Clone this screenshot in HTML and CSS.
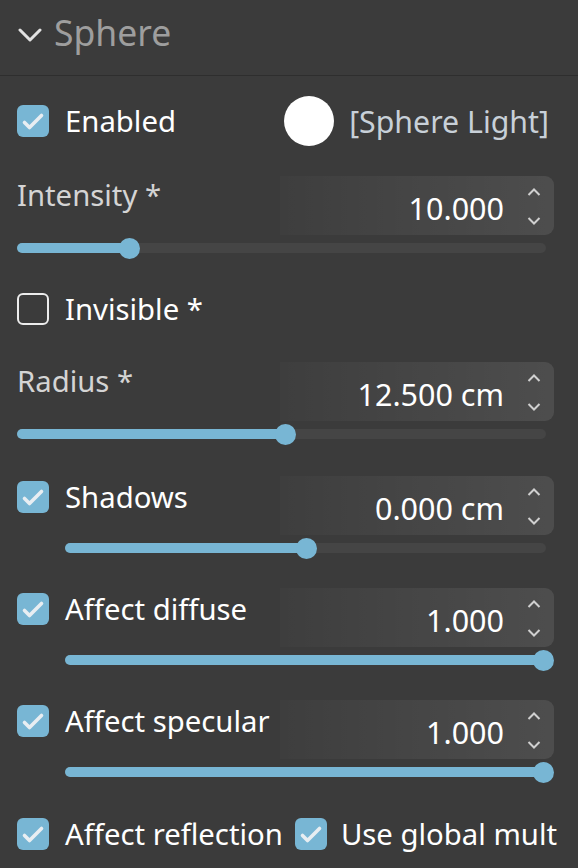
FILE: index.html
```html
<!DOCTYPE html>
<html>
<head>
<meta charset="utf-8">
<link rel="stylesheet" href="styles.css">
</head>
<body>
<div class="header">
  <svg class="chev" width="24" height="14" viewBox="0 0 24 14"><polyline points="2,2 12,12 22,2" fill="none" stroke="#e2e2e2" stroke-width="3" stroke-linecap="round" stroke-linejoin="round"/></svg>
  <span class="title">Sphere</span>
</div>
<div class="panel">
  <div class="row-enabled">
    <div class="check-label">
      <span class="cb on"><svg width="32" height="32" viewBox="0 0 32 32"><polyline points="7.5,17.5 12.5,22.5 24.5,10.5" fill="none" stroke="#e8eef2" stroke-width="3.6" stroke-linecap="round" stroke-linejoin="round"/></svg></span>
      <span class="txt">Enabled</span>
    </div>
    <div class="light">
      <span class="dot"></span>
      <span class="light-name">[Sphere Light]</span>
    </div>
  </div>

  <div class="prop m-intensity">
    <div class="prop-head">
      <span class="prop-label">Intensity *</span>
      <div class="field"><span class="val">10.000</span><svg class="spin" width="14" height="59" viewBox="0 0 14 59"><polyline points="1.5,19 7,13.5 12.5,19" fill="none" stroke="#d0d0d0" stroke-width="2"/><polyline points="1.5,42 7,47.5 12.5,42" fill="none" stroke="#d0d0d0" stroke-width="2"/></svg></div>
    </div>
    <div class="slider"><div class="track"><div class="fill" style="width:21.2%"><span class="thumb"></span></div></div></div>
  </div>

  <div class="check-label m-invisible">
    <span class="cb off"></span>
    <span class="txt">Invisible *</span>
  </div>

  <div class="prop m-radius">
    <div class="prop-head">
      <span class="prop-label">Radius *</span>
      <div class="field"><span class="val">12.500 cm</span><svg class="spin" width="14" height="59" viewBox="0 0 14 59"><polyline points="1.5,19 7,13.5 12.5,19" fill="none" stroke="#d0d0d0" stroke-width="2"/><polyline points="1.5,42 7,47.5 12.5,42" fill="none" stroke="#d0d0d0" stroke-width="2"/></svg></div>
    </div>
    <div class="slider"><div class="track"><div class="fill" style="width:50.7%"><span class="thumb"></span></div></div></div>
  </div>

  <div class="prop m-shadows">
    <div class="prop-head">
      <div class="check-label head-check">
        <span class="cb on"><svg width="32" height="32" viewBox="0 0 32 32"><polyline points="7.5,17.5 12.5,22.5 24.5,10.5" fill="none" stroke="#e8eef2" stroke-width="3.6" stroke-linecap="round" stroke-linejoin="round"/></svg></span>
        <span class="txt">Shadows</span>
      </div>
      <div class="field"><span class="val">0.000 cm</span><svg class="spin" width="14" height="59" viewBox="0 0 14 59"><polyline points="1.5,19 7,13.5 12.5,19" fill="none" stroke="#d0d0d0" stroke-width="2"/><polyline points="1.5,42 7,47.5 12.5,42" fill="none" stroke="#d0d0d0" stroke-width="2"/></svg></div>
    </div>
    <div class="slider indent"><div class="track"><div class="fill" style="width:50.3%"><span class="thumb"></span></div></div></div>
  </div>

  <div class="prop m-affect">
    <div class="prop-head">
      <div class="check-label head-check">
        <span class="cb on"><svg width="32" height="32" viewBox="0 0 32 32"><polyline points="7.5,17.5 12.5,22.5 24.5,10.5" fill="none" stroke="#e8eef2" stroke-width="3.6" stroke-linecap="round" stroke-linejoin="round"/></svg></span>
        <span class="txt">Affect diffuse</span>
      </div>
      <div class="field"><span class="val">1.000</span><svg class="spin" width="14" height="59" viewBox="0 0 14 59"><polyline points="1.5,19 7,13.5 12.5,19" fill="none" stroke="#d0d0d0" stroke-width="2"/><polyline points="1.5,42 7,47.5 12.5,42" fill="none" stroke="#d0d0d0" stroke-width="2"/></svg></div>
    </div>
    <div class="slider indent"><div class="track"><div class="fill" style="width:99.4%"><span class="thumb"></span></div></div></div>
  </div>

  <div class="prop m-affect">
    <div class="prop-head">
      <div class="check-label head-check">
        <span class="cb on"><svg width="32" height="32" viewBox="0 0 32 32"><polyline points="7.5,17.5 12.5,22.5 24.5,10.5" fill="none" stroke="#e8eef2" stroke-width="3.6" stroke-linecap="round" stroke-linejoin="round"/></svg></span>
        <span class="txt">Affect specular</span>
      </div>
      <div class="field"><span class="val">1.000</span><svg class="spin" width="14" height="59" viewBox="0 0 14 59"><polyline points="1.5,19 7,13.5 12.5,19" fill="none" stroke="#d0d0d0" stroke-width="2"/><polyline points="1.5,42 7,47.5 12.5,42" fill="none" stroke="#d0d0d0" stroke-width="2"/></svg></div>
    </div>
    <div class="slider indent"><div class="track"><div class="fill" style="width:99.4%"><span class="thumb"></span></div></div></div>
  </div>

  <div class="bottom-row">
    <div class="check-label">
      <span class="cb on"><svg width="32" height="32" viewBox="0 0 32 32"><polyline points="7.5,17.5 12.5,22.5 24.5,10.5" fill="none" stroke="#e8eef2" stroke-width="3.6" stroke-linecap="round" stroke-linejoin="round"/></svg></span>
      <span class="txt">Affect reflection</span>
    </div>
    <div class="check-label tight">
      <span class="cb on"><svg width="32" height="32" viewBox="0 0 32 32"><polyline points="7.5,17.5 12.5,22.5 24.5,10.5" fill="none" stroke="#e8eef2" stroke-width="3.6" stroke-linecap="round" stroke-linejoin="round"/></svg></span>
      <span class="txt">Use global mult</span>
    </div>
  </div>
</div>
</body>
</html>
```

FILE: styles.css
```css
html, body {
  margin: 0;
  padding: 0;
  background: #3b3b3b;
  font-family: "Noto Sans", "Open Sans", sans-serif;
  color: #ffffff;
  width: 578px;
  height: 868px;
  overflow: hidden;
}

.header {
  border-bottom: 1px solid #2e2e2e;
  display: flex;
  align-items: center;
  padding-left: 18px;
  gap: 12px;
  box-sizing: border-box;
  height: 76px;
}

.chev {
  display: block;
  margin-top: -6px;
}

.title {
  font-size: 35.5px;
  color: #9e9e9e;
  line-height: 1;
  margin-top: -9px;
}

.panel {
  padding: 20px 24px 0 17px;
}

.row-enabled {
  height: 50px;
  display: flex;
  align-items: center;
  justify-content: space-between;
}

.check-label {
  display: flex;
  align-items: center;
  gap: 16px;
  height: 32px;
}

.check-label.tight {
  gap: 14px;
}

.txt {
  font-size: 29.3px;
  line-height: 32px;
  color: #ffffff;
  white-space: nowrap;
}

.cb {
  width: 32px;
  height: 32px;
  border-radius: 6px;
  box-sizing: border-box;
  flex: none;
  display: block;
}

.cb svg {
  display: block;
}

.cb.on {
  background: #78b6d4;
}

.cb.off {
  border: 2px solid #ececec;
}

.light {
  display: flex;
  align-items: center;
  gap: 15px;
  padding-right: 5px;
}

.dot {
  width: 50px;
  height: 50px;
  border-radius: 50%;
  background: #ffffff;
  display: block;
}

.light-name {
  font-size: 30.3px;
  color: #c8d0d8;
  white-space: nowrap;
}

.prop-head {
  display: flex;
  justify-content: space-between;
  align-items: flex-start;
  height: 59px;
}

.prop-label {
  font-size: 29.3px;
  color: #d4d4d4;
  line-height: normal;
  white-space: nowrap;
  margin-top: -1px;
}

.head-check {
  margin-top: 5px;
}

.field {
  width: 274px;
  height: 59px;
  border-radius: 0 9px 9px 0;
  background: linear-gradient(90deg, rgba(255,255,255,0.015), rgba(255,255,255,0.095));
  display: flex;
  align-items: center;
  justify-content: flex-end;
  padding-right: 13px;
  box-sizing: border-box;
  gap: 23px;
}

.val {
  font-size: 30.5px;
  color: #ffffff;
  padding-top: 4px;
  white-space: nowrap;
}

.spin {
  display: block;
  flex: none;
}

.slider {
  height: 26px;
  display: flex;
  align-items: center;
  padding-right: 8px;
}

.slider.indent {
  padding-left: 48px;
}

.track {
  flex: 1;
  height: 10px;
  border-radius: 5px;
  background: #454545;
}

.fill {
  height: 100%;
  border-radius: 5px;
  background: #78b6d4;
  position: relative;
}

.thumb {
  position: absolute;
  right: -10.5px;
  top: -5.5px;
  width: 21px;
  height: 21px;
  border-radius: 50%;
  background: #78b6d4;
}

.m-intensity { margin-top: 30px; }
.m-invisible { margin-top: 32px; }
.m-radius { margin-top: 37px; }
.m-shadows { margin-top: 29px; }
.m-affect { margin-top: 27px; }

.bottom-row {
  margin-top: 33px;
  display: flex;
  gap: 12px;
}
```
